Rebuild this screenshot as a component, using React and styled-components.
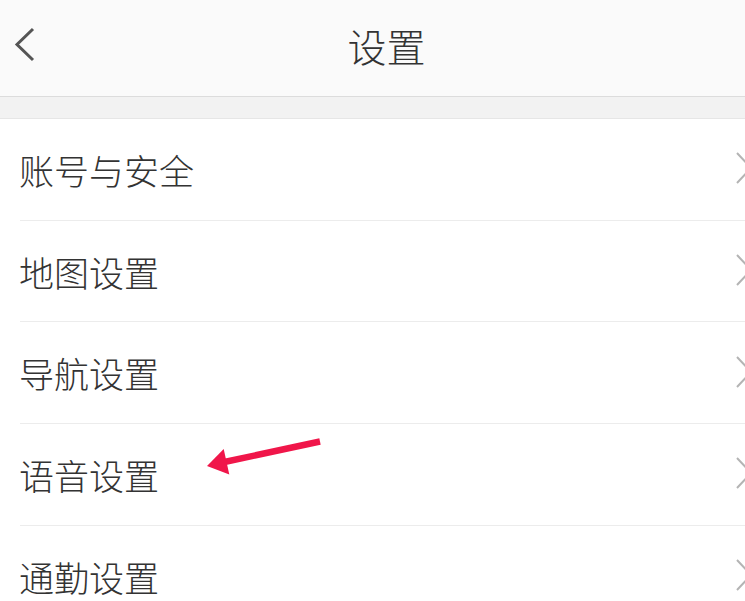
import React from "react";
import styled, { createGlobalStyle } from "styled-components";

const Global = createGlobalStyle`
  html, body { margin: 0; padding: 0; background: #ffffff; overflow: hidden; }
  body { font-family: "Noto Sans CJK SC", "Noto Sans", sans-serif; }
`;

const Page = styled.div`
  position: relative;
  width: 745px;
  height: 601px;
  overflow: hidden;
  background: #ffffff;
`;

const Header = styled.header`
  height: 96px;
  border-bottom: 1px solid #dcdcdc;
  background: #fafafa;
  display: grid;
  grid-template-columns: 60px 1fr 60px;
  align-items: center;
`;

const BackButton = styled.div`
  display: flex;
  align-items: center;
  padding-left: 14px;
  padding-bottom: 6px;
  height: 100%;
  box-sizing: border-box;
`;

const Title = styled.h1`
  margin: 0 0 6px;
  text-align: center;
  font-size: 39px;
  font-weight: 300;
  color: #333333;
  line-height: 1;
  transform: translateX(14px);
`;

const Band = styled.div`
  height: 21px;
  background: #f2f2f2;
  border-bottom: 1px solid #e6e6e6;
`;

const List = styled.ul`
  list-style: none;
  margin: 0;
  padding: 0 0 0 20px;
`;

const Row = styled.li`
  height: 100.7px;
  border-bottom: 1px solid #ececec;
  display: flex;
  align-items: center;
  justify-content: space-between;
`;

const Label = styled.span`
  font-size: 35px;
  font-weight: 300;
  color: #333333;
  line-height: 1;
  margin-left: -1px;
`;

const Chevron = styled.svg`
  width: 18px;
  height: 34px;
  margin-right: -8px;
  flex: none;
`;

const Annotation = styled.svg`
  position: absolute;
  left: 200px;
  top: 430px;
  width: 130px;
  height: 50px;
  pointer-events: none;
`;

const items = ["账号与安全", "地图设置", "导航设置", "语音设置", "通勤设置"];

export default function App() {
  return (
    <Page>
      <Global />
      <Header>
        <BackButton>
          <svg width="24" height="36" viewBox="0 0 24 36">
            <polyline
              points="19,2 3,17.5 19,33"
              fill="none"
              stroke="#555555"
              strokeWidth="3"
            />
          </svg>
        </BackButton>
        <Title>设置</Title>
        <div />
      </Header>
      <Band />
      <List>
        {items.map((t) => (
          <Row key={t}>
            <Label>{t}</Label>
            <Chevron viewBox="0 0 18 34">
              <polyline
                points="2,1 16,16 2,31"
                fill="none"
                stroke="#b4b4b4"
                strokeWidth="2"
              />
            </Chevron>
          </Row>
        ))}
      </List>
      <Annotation viewBox="200 430 130 50">
        <line
          x1="320"
          y1="441.5"
          x2="222"
          y2="462.5"
          stroke="#f0164a"
          strokeWidth="6.5"
        />
        <polygon points="207,466 223.7,449 229.3,474.5" fill="#f0164a" />
      </Annotation>
    </Page>
  );
}
